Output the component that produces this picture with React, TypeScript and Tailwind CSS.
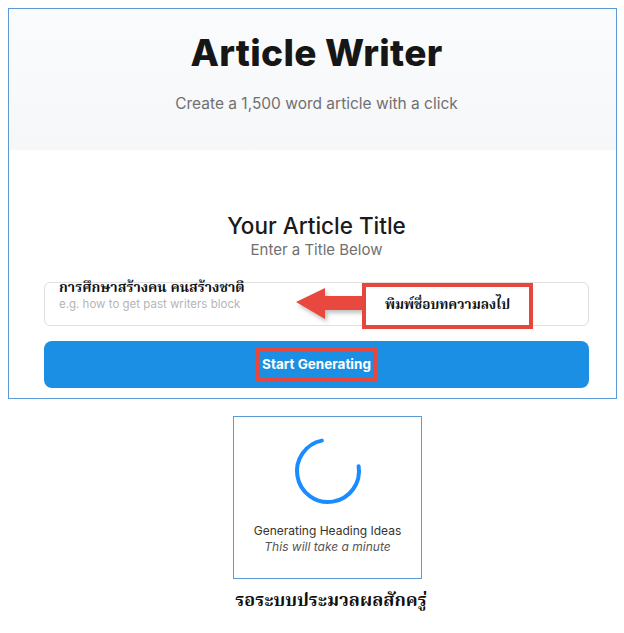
import React from "react";

export default function App() {
  const thai = "font-['Norasi','Noto_Serif_Thai','Noto_Sans_Thai','Liberation_Serif',serif]";
  return (
    <div className="w-[624px] h-[633px] bg-white font-['Inter','Liberation_Sans',sans-serif] overflow-hidden">
      <div className="pt-[8px] pl-[8px]">
        <div className="w-[609px] border border-[#5b9bd5]">
          <div className="h-[141px] bg-gradient-to-b from-[#fafbfc] to-[#f6f7f9] pl-[35px] pr-[27px] flex flex-col items-center">
            <h1 className="mt-[24px] text-[37px] leading-[40px] font-extrabold text-[#161616] tracking-[0.3px]">
              Article Writer
            </h1>
            <p className="mt-[21px] text-[15.5px] leading-[20px] text-[#707070]">
              Create a 1,500 word article with a click
            </p>
          </div>
          <div className="pl-[35px] pr-[27px] pb-[10px] pt-[62px]">
            <div className="flex flex-col items-center">
              <h2 className="text-[22.5px] leading-[28px] font-medium text-[#1a1a1a]">Your Article Title</h2>
              <p className="text-[15px] leading-[20px] text-[#707070]">Enter a Title Below</p>
            </div>
            <div className="relative mt-[22px] h-[44px]">
              <input
                className="w-full h-full rounded-[6px] border border-[#e0e0e0] pl-[14px] text-[11.5px] outline-none placeholder:text-[#b5b5b5]"
                placeholder="e.g. how to get past writers block"
              />
              <span className={`absolute left-[15px] top-[-4px] text-[14px] leading-[20px] font-bold text-[#111] whitespace-nowrap ${thai}`}>
                การศึกษาสร้างคน คนสร้างชาติ
              </span>
              <svg
                className="absolute left-[250px] top-[4px] drop-shadow-[2px_3px_2px_rgba(0,0,0,0.25)]"
                width="72"
                height="36"
                viewBox="0 0 72 36"
              >
                <polygon points="2,16 31,2 31,10 70,10 70,24 31,24 31,33" fill="#e8483e" />
              </svg>
              <div className="absolute left-[318px] top-[1px] w-[171px] h-[46px] border-[4px] border-[#e5473d] bg-white flex items-center justify-center">
                <span className={`text-[13.5px] font-bold text-[#111] whitespace-nowrap ${thai}`}>พิมพ์ชื่อบทความลงไป</span>
              </div>
            </div>
            <button className="mt-[15px] w-full h-[47px] rounded-[8px] bg-[#1b8fe3] flex items-center justify-center">
              <span className="w-[121px] h-[33px] border-[3px] border-[#e5473d] flex items-center justify-center text-white font-bold text-[13.5px] whitespace-nowrap">
                Start Generating
              </span>
            </button>
          </div>
        </div>
      </div>
      <div className="ml-[233px] mt-[17px] w-[189px] h-[163px] border border-[#5b9bd5] flex flex-col items-center">
        <svg className="mt-[19px]" width="70" height="70" viewBox="0 0 70 70">
          <circle
            cx="35"
            cy="35"
            r="31"
            fill="none"
            stroke="#1a8cff"
            strokeWidth="4"
            strokeLinecap="round"
            strokeDasharray="144.5 200"
            transform="rotate(-9 35 35)"
          />
        </svg>
        <p className="mt-[17px] text-[12px] leading-[16px] text-[#333] whitespace-nowrap">Generating Heading Ideas</p>
        <p className="text-[12px] leading-[16px] italic text-[#555] whitespace-nowrap">This will take a minute</p>
      </div>
      <div className={`ml-[233px] mt-[9px] w-[196px] text-center text-[18px] leading-[28px] font-bold text-[#111] whitespace-nowrap ${thai}`}>
        รอระบบประมวลผลสักครู่
      </div>
    </div>
  );
}
